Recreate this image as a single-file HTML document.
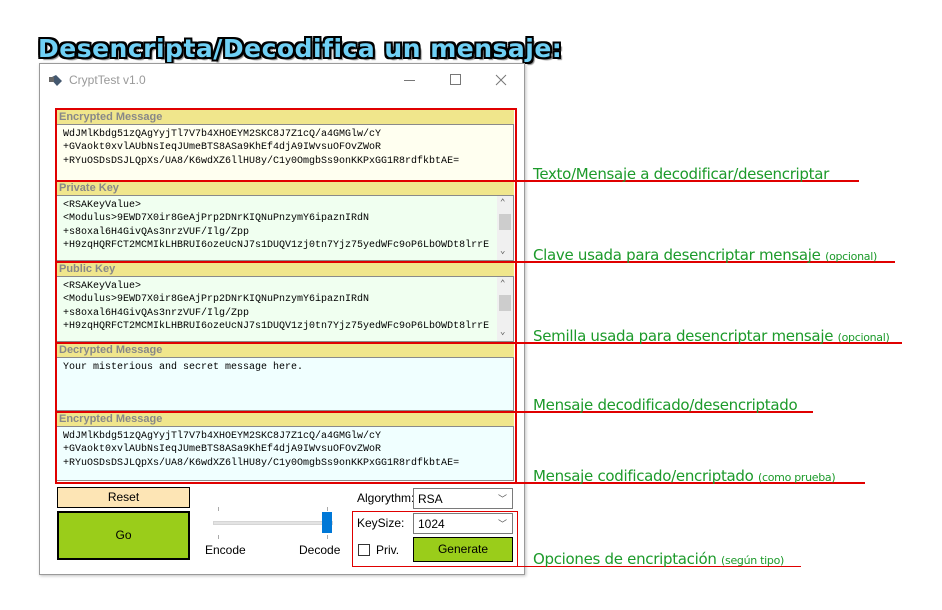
<!DOCTYPE html>
<html><head><meta charset="utf-8"><style>
*{margin:0;padding:0;box-sizing:border-box}
body{width:942px;height:610px;background:#fff;position:relative;overflow:hidden;font-family:"Liberation Sans",sans-serif}
.a{position:absolute}
.title{left:38px;top:34px;font-size:25px;font-weight:bold;color:#6fd0f5;letter-spacing:0.5px;
text-shadow:-2px -2px 0 #000,2px -2px 0 #000,-2px 2px 0 #000,2px 2px 0 #000,0 2px 0 #000,0 -2px 0 #000,2px 0 0 #000,-2px 0 0 #000,3px 3px 1px #888;font-family:"DejaVu Sans",sans-serif}
.win{left:39px;top:63px;width:486px;height:512px;border:1px solid #9a9a9a;background:#fff;box-shadow:1px 1px 3px rgba(0,0,0,.25)}
.hd{background:#f0e68c;color:#888;font-size:11px;font-weight:bold;height:14px;line-height:14px;padding-left:3px}
.ta{border:1px solid #8a8a8a;font-family:"Liberation Mono",monospace;font-size:10px;line-height:13.4px;padding:3px 6px;white-space:pre;overflow:hidden;color:#000;position:relative}
.rb{border:2px solid #e00000}
.note{color:#1c9a2a;font-size:15px;font-family:"DejaVu Sans",sans-serif;letter-spacing:-0.3px}
.note small{font-size:11px}
.ln{height:0;border-top:2px solid #e00000}
.sb{position:absolute;right:0;top:0;bottom:0;width:16px;background:#f0f0f0}
.sb i{position:absolute;left:2px;width:12px;height:16px;background:#cdcdcd;top:18px}
.sb b{position:absolute;left:3px;font-size:9px;color:#555;font-weight:normal}
.btn{border:2px solid #000;text-align:center;font-size:12px}
.cb{border:1px solid #7a7a7a;background:#fff;font-size:12px;padding-left:4px;line-height:20px}
</style></head><body>
<div class="a title">Desencripta/Decodifica un mensaje:</div>
<div class="a win"></div>
<svg class="a" style="left:48px;top:74px" width="16" height="14"><path d="M2 4l6-3 6 6-5 5z" fill="#44586f"/><rect x="1" y="3" width="5" height="5" fill="#666"/></svg>
<div class="a" style="left:69px;top:73px;font-size:12px;color:#999">CryptTest v1.0</div>
<div class="a" style="left:404px;top:80px;width:11px;height:1px;background:#777"></div>
<div class="a" style="left:450px;top:74px;width:11px;height:11px;border:1px solid #777"></div>
<svg class="a" style="left:495px;top:74px" width="12" height="12"><path d="M1 1l10 10M11 1L1 11" stroke="#777"/></svg>

<div class="a" style="left:56px;top:110px;width:458px">
<div class="hd">Encrypted Message</div>
<div class="ta" style="height:57px;background:#fffff0">WdJMlKbdg51zQAgYyjTl7V7b4XHOEYM2SKC8J7Z1cQ/a4GMGlw/cY
+GVaokt0xvlAUbNsIeqJUmeBTS8ASa9KhEf4djA9IWvsuOFOvZWoR
+RYuOSDsDSJLQpXs/UA8/K6wdXZ6llHU8y/C1y0OmgbSs9onKKPxGG1R8rdfkbtAE=</div>
<div class="hd">Private Key</div>
<div class="ta" style="height:66px;background:#f0fff0">&lt;RSAKeyValue&gt;
&lt;Modulus&gt;9EWD7X0ir8GeAjPrp2DNrKIQNuPnzymY6ipaznIRdN
+s8oxal6H4GivQAs3nrzVUF/Ilg/Zpp
+H9zqHQRFCT2MCMIkLHBRUI6ozeUcNJ7s1DUQV1zj0tn7Yjz75yedWFc9oP6LbOWDt8lrrE<div class="sb"><b style="top:1px">⌃</b><i></i><b style="bottom:2px">⌄</b></div></div>
<div class="hd" style="margin-top:1px">Public Key</div>
<div class="ta" style="height:66px;background:#f0fff0">&lt;RSAKeyValue&gt;
&lt;Modulus&gt;9EWD7X0ir8GeAjPrp2DNrKIQNuPnzymY6ipaznIRdN
+s8oxal6H4GivQAs3nrzVUF/Ilg/Zpp
+H9zqHQRFCT2MCMIkLHBRUI6ozeUcNJ7s1DUQV1zj0tn7Yjz75yedWFc9oP6LbOWDt8lrrE<div class="sb"><b style="top:1px">⌃</b><i></i><b style="bottom:2px">⌄</b></div></div>
<div class="hd" style="margin-top:1px">Decrypted Message</div>
<div class="ta" style="height:54px;background:#f0ffff">Your misterious and secret message here.</div>
<div class="hd" style="margin-top:1px">Encrypted Message</div>
<div class="ta" style="height:55px;background:#f0ffff">WdJMlKbdg51zQAgYyjTl7V7b4XHOEYM2SKC8J7Z1cQ/a4GMGlw/cY
+GVaokt0xvlAUbNsIeqJUmeBTS8ASa9KhEf4djA9IWvsuOFOvZWoR
+RYuOSDsDSJLQpXs/UA8/K6wdXZ6llHU8y/C1y0OmgbSs9onKKPxGG1R8rdfkbtAE=</div>
</div>

<div class="a rb" style="left:55px;top:108px;width:462px;height:74px"></div>
<div class="a rb" style="left:55px;top:180px;width:462px;height:83px"></div>
<div class="a rb" style="left:55px;top:261px;width:462px;height:83px"></div>
<div class="a rb" style="left:55px;top:342px;width:462px;height:71px"></div>
<div class="a rb" style="left:55px;top:411px;width:462px;height:73px"></div>
<div class="a" style="left:352px;top:511px;width:166px;height:56px;border:1px solid #e00000"></div>

<div class="a ln" style="left:515px;top:180px;width:344px"></div>
<div class="a ln" style="left:515px;top:261px;width:380px"></div>
<div class="a ln" style="left:515px;top:342px;width:387px"></div>
<div class="a ln" style="left:515px;top:411px;width:298px"></div>
<div class="a ln" style="left:515px;top:482px;width:350px"></div>
<div class="a" style="left:517px;top:566px;width:284px;height:1px;background:#e00000"></div>

<div class="a note" style="left:533px;top:165px">Texto/Mensaje a decodificar/desencriptar</div>
<div class="a note" style="left:533px;top:246px">Clave usada para desencriptar mensaje <small>(opcional)</small></div>
<div class="a note" style="left:533px;top:327px">Semilla usada para desencriptar mensaje <small>(opcional)</small></div>
<div class="a note" style="left:533px;top:396px">Mensaje decodificado/desencriptado</div>
<div class="a note" style="left:533px;top:467px">Mensaje codificado/encriptado <small>(como prueba)</small></div>
<div class="a note" style="left:533px;top:550px">Opciones de encriptación <small>(según tipo)</small></div>

<div class="a" style="left:57px;top:487px;width:133px;height:21px;border:1px solid #000;background:#fde5b5;text-align:center;font-size:12px;line-height:19px">Reset</div>
<div class="a btn" style="left:57px;top:511px;width:133px;height:49px;background:#9acd1a;line-height:45px">Go</div>
<div class="a" style="left:213px;top:521px;width:120px;height:4px;background:#e3e3e3;border:1px solid #d5d5d5"></div>
<div class="a" style="left:218px;top:507px;width:1px;height:4px;background:#aaa"></div>
<div class="a" style="left:218px;top:535px;width:1px;height:4px;background:#aaa"></div>
<div class="a" style="left:327px;top:507px;width:1px;height:4px;background:#aaa"></div>
<div class="a" style="left:327px;top:535px;width:1px;height:4px;background:#aaa"></div>
<div class="a" style="left:322px;top:512px;width:10px;height:21px;background:#0078d7"></div>
<div class="a" style="left:205px;top:543px;font-size:12px">Encode</div>
<div class="a" style="left:299px;top:543px;font-size:12px">Decode</div>
<div class="a" style="left:357px;top:491px;font-size:12px">Algorythm:</div>
<div class="a cb" style="left:413px;top:488px;width:100px;height:21px">RSA<span style="position:absolute;right:5px;top:0;font-size:9px;color:#555">﹀</span></div>
<div class="a" style="left:357px;top:516px;font-size:12px">KeySize:</div>
<div class="a cb" style="left:413px;top:513px;width:100px;height:21px">1024<span style="position:absolute;right:5px;top:0;font-size:9px;color:#555">﹀</span></div>
<div class="a" style="left:358px;top:544px;width:12px;height:12px;border:1px solid #333;background:#fff"></div>
<div class="a" style="left:376px;top:543px;font-size:12px">Priv.</div>
<div class="a" style="left:413px;top:537px;width:100px;height:25px;border:1px solid #000;background:#9acd1a;text-align:center;font-size:12px;line-height:23px">Generate</div>
</body></html>
